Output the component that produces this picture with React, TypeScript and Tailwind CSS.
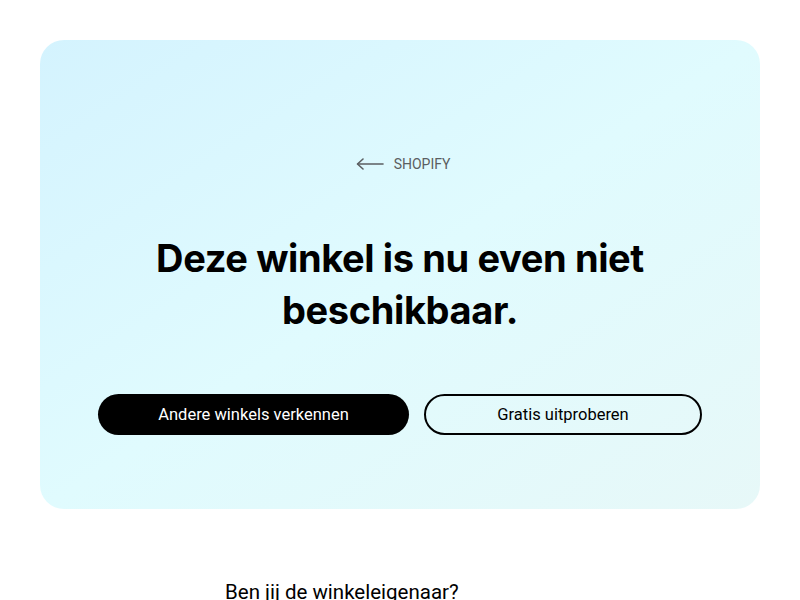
export default function App() {
  return (
    <div className="min-h-screen bg-white px-10 pt-10 font-['Roboto',sans-serif]">
      <section className="flex h-[469px] flex-col items-center rounded-[24px] bg-gradient-to-br from-[#d4f3fe] via-[#e0fbfe] to-[#e7f8f8] pt-[114px]">
        <a className="ml-[6px] flex items-center gap-[10px] text-sm leading-5 text-[#5b5e61]">
          <svg width="28" height="12" viewBox="0 0 28 12" fill="none" stroke="currentColor" strokeWidth="1.6" strokeLinecap="round" strokeLinejoin="round">
            <path d="M27 6H2" />
            <path d="M7 1L1.5 6L7 11" />
          </svg>
          SHOPIFY
        </a>
        <h1 className="mt-[58px] max-w-[520px] text-center font-['Inter',sans-serif] text-[38px] font-bold leading-[52px] tracking-[-0.01em] text-black">
          Deze winkel is nu even niet beschikbaar.
        </h1>
        <div className="mt-[58px] flex gap-[15px]">
          <button className="h-[41px] w-[311px] rounded-full bg-black pt-px text-[16.5px] text-white">
            Andere winkels verkennen
          </button>
          <button className="h-[41px] w-[278px] rounded-full border-2 border-black pt-px text-[16.5px] text-black">
            Gratis uitproberen
          </button>
        </div>
      </section>
      <p className="mt-[69px] pl-[185px] text-[20.5px] leading-7 text-black">Ben jij de winkeleigenaar?</p>
    </div>
  );
}
